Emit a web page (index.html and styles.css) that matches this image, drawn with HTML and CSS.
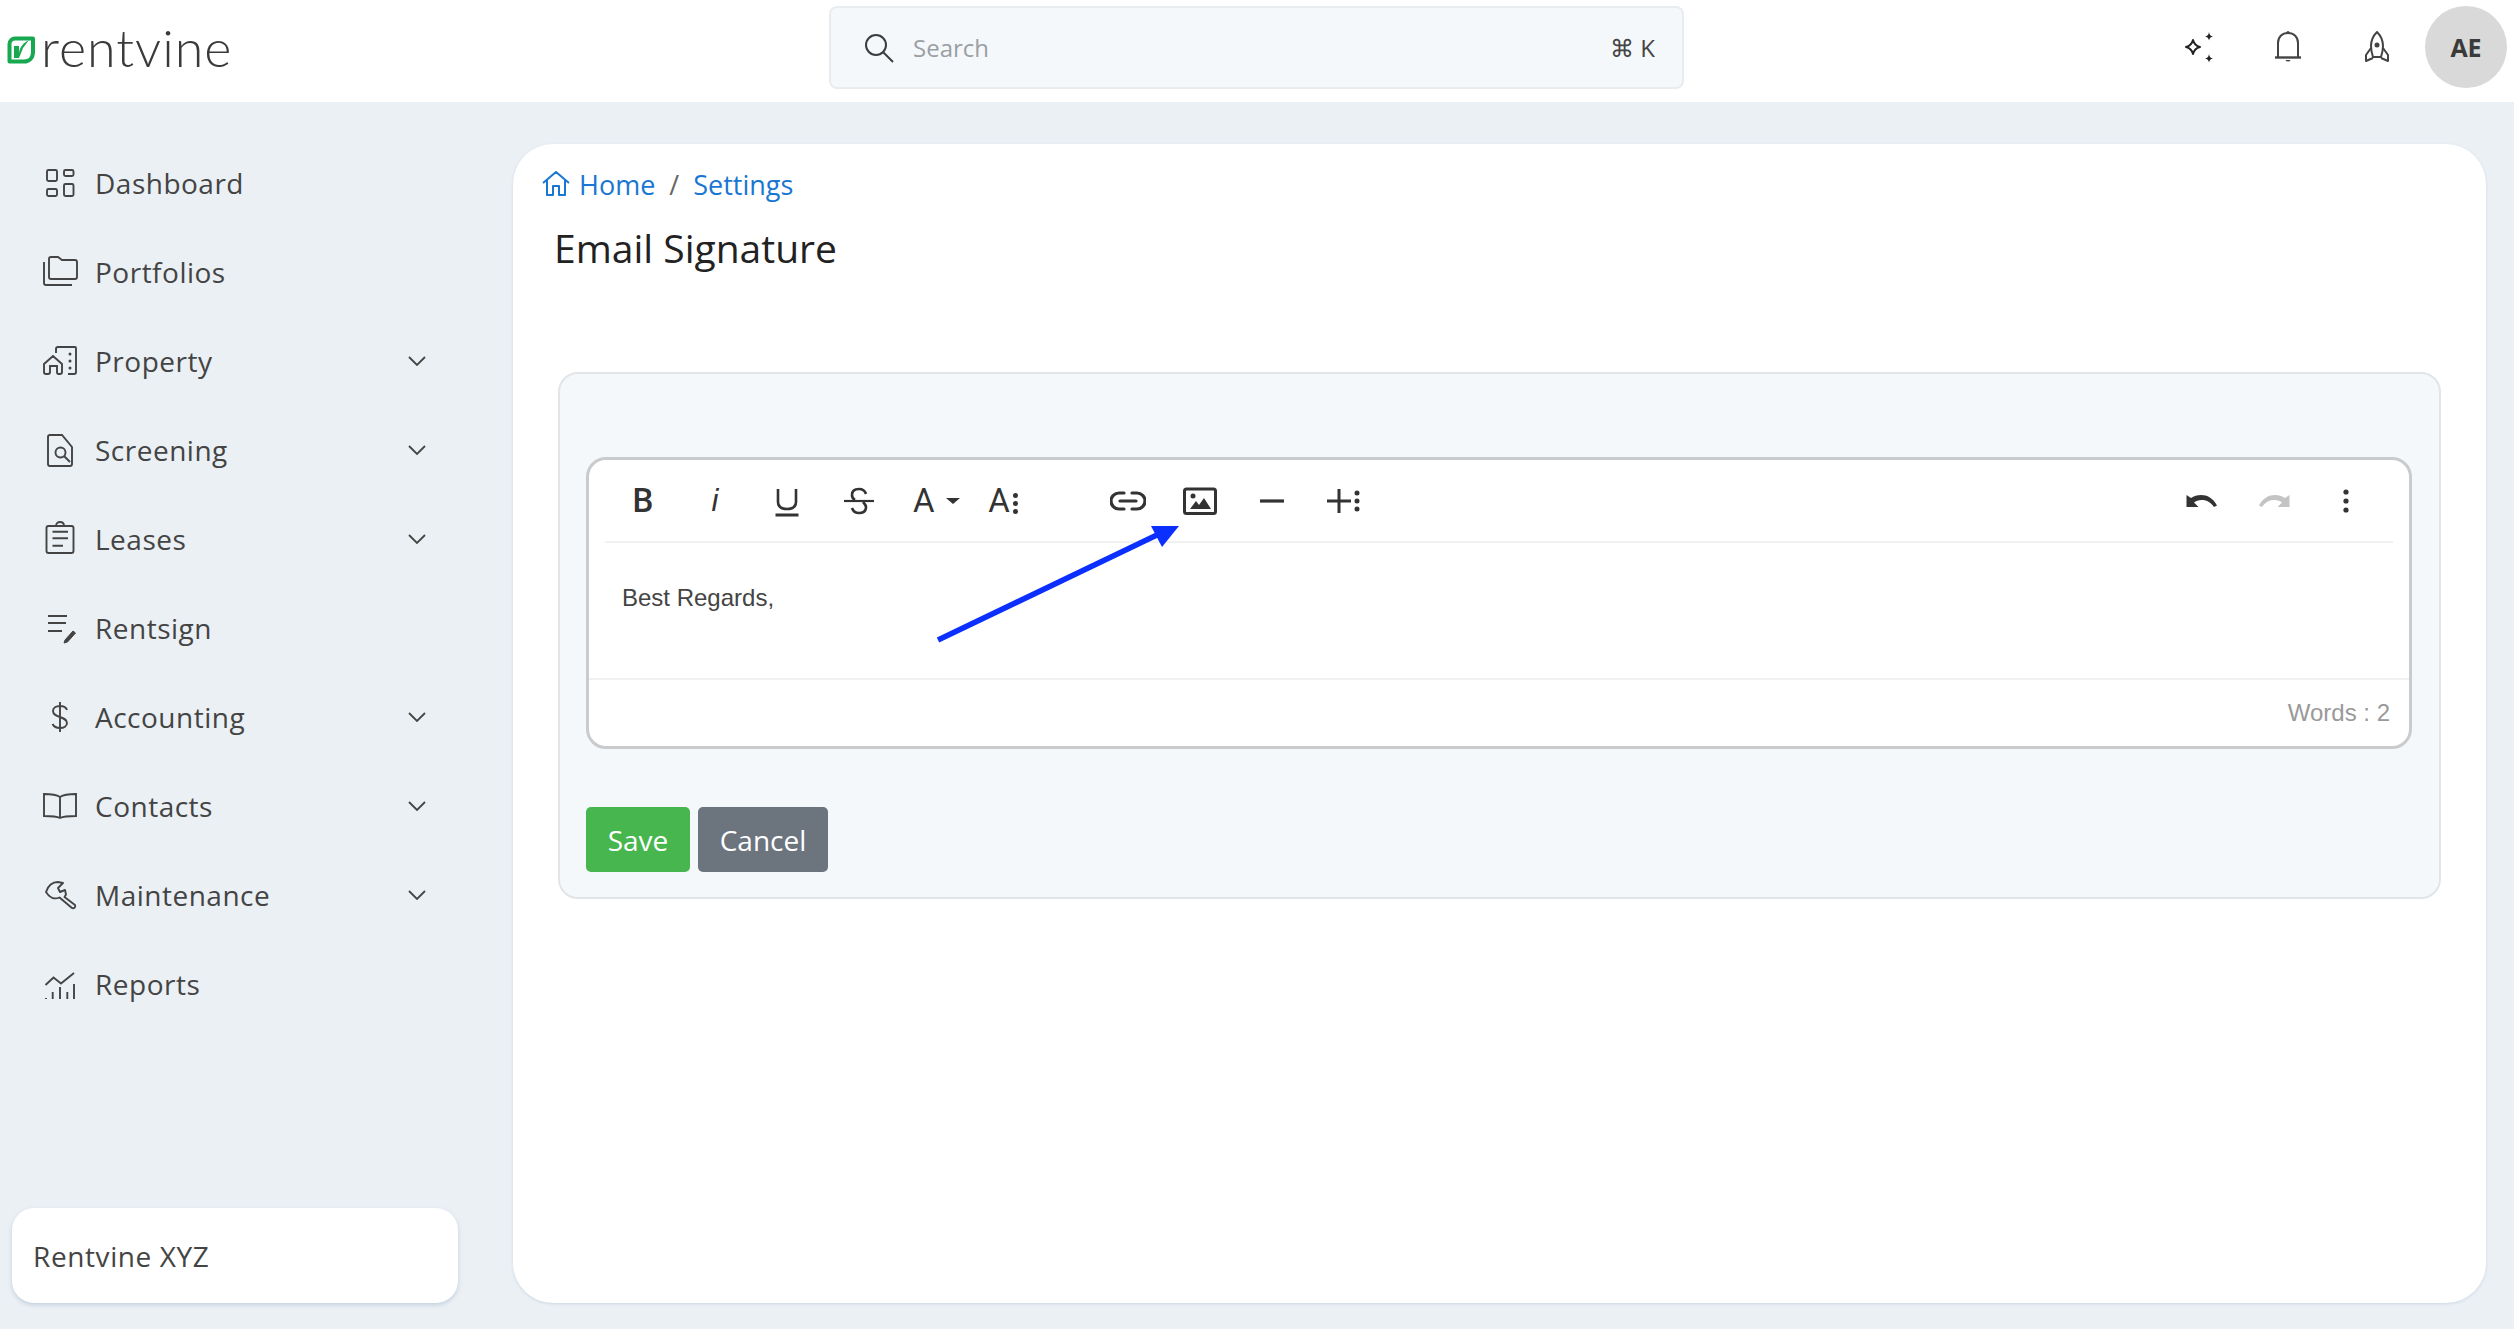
FILE: index.html
```html
<!DOCTYPE html>
<html lang="en">
<head>
    <meta charset="UTF-8">
    <meta name="viewport" content="width=device-width, initial-scale=1.0">
    <title>Email Signature</title>
    <link rel="stylesheet" href="styles.css">
</head>
<body>
  <header class="topbar">
    <div class="logo">
      <svg class="logo-mark" width="28" height="28" viewBox="0 0 28 28">
        <path d="M8 2.500H26V16C26 22 22 25.500 17 25.500H2.500V8C2.500 5 5 2.500 8 2.500z" fill="none" stroke="#16a950" stroke-width="4" stroke-linejoin="round"/>
        <path d="M7 10v12h5l4-10 6-8c-6 3-9 7-10 13v-7z" fill="#16a950"/>
      </svg>
      <span class="logo-text">rentvine</span>
    </div>
    <div class="search">
      <svg width="32" height="32" viewBox="0 0 32 32" fill="none" stroke="#3c3c3c" stroke-width="2">
        <circle cx="13" cy="13" r="10"/><path d="M20 20l10 10"/>
      </svg>
      <span class="search-text">Search</span>
      <span class="search-key">⌘ K</span>
    </div>
    <div class="top-icons">
      <svg class="top-icon" width="34" height="34" viewBox="0 0 34 34">
        <path d="M11 10c1 4 3 6 7 7-4 1-6 3-7 7-1-4-3-6-7-7 4-1 6-3 7-7z" fill="none" stroke="#222" stroke-width="2" stroke-linejoin="round"/>
        <path d="M27 2c.5 3 1.500 4 4 4.500-2.500.5-3.500 1.500-4 4-.5-2.500-1.500-3.500-4-4 2.500-.5 3.500-1.500 4-4.500zM27 24c.5 3 1.500 4 4 4.500-2.500.5-3.500 1.500-4 4-.5-2.500-1.500-3.500-4-4 2.500-.5 3.500-1.500 4-4.500z" fill="#222"/>
      </svg>
      <svg class="top-icon" width="34" height="34" viewBox="0 0 34 34" fill="none" stroke="#444" stroke-width="2">
        <path d="M7 27V13C7 7 11 3 17 3s10 4 10 10v14"/><path d="M4 27.500h26" stroke-width="2.400"/>
        <path d="M14.500 30c1 2 4 2 5 0z" fill="#444" stroke="none"/><circle cx="17" cy="2.500" r="1.500" fill="#444" stroke="none"/>
      </svg>
      <svg class="top-icon" width="34" height="34" viewBox="0 0 34 34" fill="none" stroke="#444" stroke-width="2" stroke-linejoin="round">
        <path d="M17 2c-4 4-6 9-6 14 0 4 1 8 2 11h8c1-3 2-7 2-11 0-5-2-10-6-14z"/>
        <path d="M11 18l-5 7v6l7-3M23 18l5 7v6l-7-3"/>
        <circle cx="17" cy="15" r="2.500" fill="#444" stroke="none"/>
      </svg>
      <div class="avatar">AE</div>
    </div>
  </header>

  <div class="layout">
    <aside class="sidebar">
      <nav class="menu">
        <a class="menu-item">
          <svg class="menu-icon" viewBox="0 0 36 36"><rect x="5" y="5" width="10" height="11" rx="1.500"/><rect x="22" y="5" width="9.500" height="6" rx="1.500"/><rect x="5" y="24" width="10" height="7" rx="1.500"/><rect x="22" y="19" width="9.500" height="12" rx="1.500"/></svg>
          <span>Dashboard</span>
        </a>
        <a class="menu-item">
          <svg class="menu-icon" viewBox="0 0 36 36"><path d="M7 5a2 2 0 0 1 2-2h7l4 3h13a2 2 0 0 1 2 2v15a2 2 0 0 1-2 2H9a2 2 0 0 1-2-2z"/><path d="M2 8v21a2 2 0 0 0 2 2h26"/></svg>
          <span>Portfolios</span>
        </a>
        <a class="menu-item">
          <svg class="menu-icon" viewBox="0 0 36 36"><path d="M14 10V6a2 2 0 0 1 2-2h17a1 1 0 0 1 1 1v24a2 2 0 0 1-2 2h-6"/><path d="M2 29v-8l9-8 9 8v8a2 2 0 0 1-2 2h-2a2 2 0 0 1-1-2v-6H8v6a2 2 0 0 1-2 2H4a2 2 0 0 1-2-2z"/><path d="M28 11v.1M28 18v.1M28 25v.1" stroke-width="3" stroke-linecap="round"/></svg>
          <span>Property</span>
          <svg class="chevron" viewBox="0 0 18 10"><path d="M1 1l8 8 8-8"/></svg>
        </a>
        <a class="menu-item">
          <svg class="menu-icon" viewBox="0 0 36 36"><path d="M8 3h12l10 12v17a2 2 0 0 1-2 2H8a2 2 0 0 1-2-2V5a2 2 0 0 1 2-2z"/><circle cx="18.500" cy="20.500" r="5"/><path d="M22 24l6 6"/></svg>
          <span>Screening</span>
          <svg class="chevron" viewBox="0 0 18 10"><path d="M1 1l8 8 8-8"/></svg>
        </a>
        <a class="menu-item">
          <svg class="menu-icon" viewBox="0 0 36 36"><rect x="4.500" y="5" width="27" height="27" rx="2"/><path d="M14 5c0-3 2-4 4-4s4 1 4 4M10.500 10.700H26M10.500 17.300H26M10.500 24.700H21"/></svg>
          <span>Leases</span>
          <svg class="chevron" viewBox="0 0 18 10"><path d="M1 1l8 8 8-8"/></svg>
        </a>
        <a class="menu-item">
          <svg class="menu-icon" viewBox="0 0 36 36"><path d="M6 6h19M6 13h18M6 21h14"/><path d="M23 30l8-9 2.500 2-8 9-3.500 1z" fill="#444" stroke-width="1"/></svg>
          <span>Rentsign</span>
        </a>
        <a class="menu-item">
          <svg class="menu-icon" viewBox="0 0 36 36"><path d="M25 11c-1-3-4-4-7-4-4 0-7 2-7 5 0 7 14 5 14 12 0 3-3 5-7 5-4 0-6-1-7.500-4M18 3v30"/></svg>
          <span>Accounting</span>
          <svg class="chevron" viewBox="0 0 18 10"><path d="M1 1l8 8 8-8"/></svg>
        </a>
        <a class="menu-item">
          <svg class="menu-icon" viewBox="0 0 36 36"><path d="M18 9c-3-2-7-3-16-3v22c9 0 13 .5 16 2 3-1.500 7-2 16-2V6c-9 0-13 1-16 3zM18 9v21"/></svg>
          <span>Contacts</span>
          <svg class="chevron" viewBox="0 0 18 10"><path d="M1 1l8 8 8-8"/></svg>
        </a>
        <a class="menu-item">
          <svg class="menu-icon" viewBox="0 0 36 36"><path d="M4 15C6 9 10 5 16 5l5 1-5 5 2 4 5-2 1 4.500-1.500 2.500L33 28c1 2-1 4-3 3L17.500 20.500C12 23 7 20 4 15z" stroke-linejoin="round"/></svg>
          <span>Maintenance</span>
          <svg class="chevron" viewBox="0 0 18 10"><path d="M1 1l8 8 8-8"/></svg>
        </a>
        <a class="menu-item">
          <svg class="menu-icon" viewBox="0 0 36 36"><path d="M3.500 19l8-7.500 7.500 6L32 7"/><path d="M4 32v1M10.700 26v7M18 21v12M25.300 26v7M32 18v15"/></svg>
          <span>Reports</span>
        </a>
      </nav>
      <div class="org-card">Rentvine XYZ</div>
    </aside>

    <main class="content">
      <div class="breadcrumb">
        <svg width="28" height="26" viewBox="0 0 28 26" fill="none" stroke="#1976d2" stroke-width="2" stroke-linejoin="round"><path d="M1 12L14 1l13 11M5 9v15h6v-9h6v9h6V9"/></svg>
        <a class="crumb-home">Home</a>
        <span class="crumb-sep">/</span>
        <a>Settings</a>
      </div>
      <h1 class="page-title">Email Signature</h1>

      <section class="panel">
        <div class="editor">
          <div class="toolbar">
            <div class="tool-group">
              <button class="tool tool-letter tool-b">B</button>
              <button class="tool tool-letter tool-i">i</button>
              <button class="tool">
                <svg width="34" height="34" viewBox="0 0 34 34" fill="none" stroke="#333" stroke-width="2.600"><path d="M8 5v13c0 5 4 7 9 7s9-2 9-7V5"/><path d="M5.500 31h23" stroke-width="3"/></svg>
              </button>
              <button class="tool">
                <svg width="34" height="34" viewBox="0 0 34 34" fill="none" stroke="#333" stroke-width="2.600"><path d="M24 10c-1-3-4-5-7-5-4 0-7 2-7 6 0 2 1 4 3 5M10 24c1 3 4 5 7 5 4 0 7-2 7-6 0-2-1-3-3-5"/><path d="M2 17h30" stroke-width="2.200"/></svg>
              </button>
              <button class="tool tool-font">
                <span class="tool-letter">A</span><span class="caret"></span>
              </button>
              <button class="tool tool-size">
                <span class="tool-letter">A</span><span class="tool-dots"><i></i><i></i><i></i></span>
              </button>
            </div>
            <div class="tool-group tool-insert">
              <button class="tool">
                <svg width="36" height="36" viewBox="0 0 36 36" fill="none" stroke="#333" stroke-width="3.200" stroke-linecap="round"><path d="M14 10H9a8 8 0 0 0 0 16h5M22 10h5a8 8 0 0 1 0 16h-5M10 18h16"/></svg>
              </button>
              <button class="tool">
                <svg width="36" height="36" viewBox="0 0 36 36"><rect x="2.500" y="6" width="31" height="24.500" rx="2" fill="none" stroke="#333" stroke-width="3"/><circle cx="11" cy="13" r="2.500" fill="#333"/><path d="M8 26l6-8 3 4 5-7 7 11z" fill="#333"/></svg>
              </button>
              <button class="tool">
                <svg width="36" height="36" viewBox="0 0 36 36"><path d="M6 18h24" stroke="#333" stroke-width="3.200"/></svg>
              </button>
              <button class="tool">
                <svg width="36" height="36" viewBox="0 0 36 36" fill="#333"><path d="M1 18h24M13 6v24" stroke="#333" stroke-width="3" fill="none"/><circle cx="31" cy="10" r="2.500"/><circle cx="31" cy="18" r="2.500"/><circle cx="31" cy="26" r="2.500"/></svg>
              </button>
            </div>
            <div class="tool-group tool-history">
              <button class="tool">
                <svg width="36" height="36" viewBox="0 0 36 36"><path d="M2.500 12v12h12l-4.500-4.500C14 16 24 15 30 24l3-1.500C27 10 14 10 7 15z" fill="#333"/></svg>
              </button>
              <button class="tool">
                <svg width="36" height="36" viewBox="0 0 36 36"><path d="M33.500 12v12h-12l4.500-4.500C22 16 12 15 6 24l-3-1.500C9 10 22 10 29 15z" fill="#c4c4c4"/></svg>
              </button>
              <button class="tool">
                <svg width="36" height="36" viewBox="0 0 36 36" fill="#333"><circle cx="18" cy="9" r="2.600"/><circle cx="18" cy="18" r="2.600"/><circle cx="18" cy="27" r="2.600"/></svg>
              </button>
            </div>
          </div>
          <div class="editor-body">Best Regards,</div>
          <div class="editor-footer">Words : 2</div>
          <svg class="arrow" width="260" height="130" viewBox="0 0 260 130">
            <path d="M5 122L226 16" stroke="#0a2fff" stroke-width="5.500"/>
            <path d="M218 8h28l-17 21z" fill="#0a2fff"/>
          </svg>
        </div>
        <div class="actions">
          <button class="btn btn-save">Save</button>
          <button class="btn btn-cancel">Cancel</button>
        </div>
      </section>
    </main>
  </div>
</body>
</html>
```

FILE: styles.css
```css
* {
    margin: 0;
    padding: 0;
    box-sizing: border-box;
}

html, body {
    height: 100%;
}

body {
    font-family: "Open Sans", sans-serif;
    background-color: #ebf0f4;
    color: #3c3c3c;
    display: flex;
    flex-direction: column;
    overflow: hidden;
}

/* Top bar */
.topbar {
    height: 102px;
    background: white;
    display: flex;
    align-items: center;
    flex-shrink: 0;
    position: relative;
}

.logo {
    width: 829px;
    display: flex;
    align-items: center;
    gap: 6px;
    padding-left: 7px;
}

.logo-mark {
    margin-top: -2px;
}

.logo-text {
    font-family: Lato, sans-serif;
    font-weight: 300;
    font-size: 52px;
    letter-spacing: 1px;
    line-height: 1;
    color: #3a3a3a;
    margin-top: -9px;
}

.search {
    width: 855px;
    height: 83px;
    margin-top: -7px;
    padding: 0 27px 0 32px;
    display: flex;
    align-items: center;
    gap: 18px;
    background: #f5f8fb;
    border: 2px solid #e9ecef;
    border-radius: 8px;
}

.search-text {
    flex: 1;
    font-size: 24px;
    color: #9a9fa3;
}

.search-key {
    font-size: 24px;
    color: #444;
}

.top-icons {
    flex: 1;
    display: flex;
    align-items: center;
    justify-content: flex-end;
    gap: 55px;
    padding-right: 7px;
    margin-top: -8px;
}

.avatar {
    width: 82px;
    height: 82px;
    margin-left: -24px;
    border-radius: 50%;
    background: #d9d9d9;
    color: #3a3a3a;
    font-size: 25px;
    font-weight: 700;
    display: flex;
    align-items: center;
    justify-content: center;
}

/* Layout */
.layout {
    flex: 1;
    display: flex;
    min-height: 0;
    padding-bottom: 26px;
}

.sidebar {
    width: 513px;
    flex-shrink: 0;
    display: flex;
    flex-direction: column;
    justify-content: space-between;
    padding: 36px 55px 0 12px;
}

.menu-item {
    height: 89px;
    display: flex;
    align-items: center;
    padding-left: 30px;
    font-size: 28px;
    letter-spacing: 0.5px;
    color: #444;
}

.menu-item span {
    flex: 1;
    margin-left: 17px;
}

.menu-icon {
    width: 36px;
    height: 36px;
    fill: none;
    stroke: #444;
    stroke-width: 1.900;
    flex-shrink: 0;
}

.chevron {
    width: 18px;
    height: 10px;
    margin-right: 32px;
    fill: none;
    stroke: #444;
    stroke-width: 1.800;
}

.org-card {
    width: 446px;
    height: 95px;
    padding-left: 21px;
    display: flex;
    align-items: center;
    background: white;
    border-radius: 22px;
    box-shadow: 0 2px 4px rgba(120, 145, 180, 0.35);
    font-size: 28px;
    letter-spacing: 0.6px;
    color: #444;
}

/* Main card */
.content {
    width: 1973px;
    background: white;
    border-radius: 40px;
    margin-top: 42px;
    padding: 20px 45px 0;
    box-shadow: 0 1px 3px rgba(120, 145, 180, 0.25);
}

.breadcrumb {
    height: 40px;
    margin-left: -16px;
    display: flex;
    align-items: center;
    font-size: 27px;
    color: #1976d2;
}

.crumb-home {
    margin-left: 9px;
}

.crumb-sep {
    margin: 0 14px;
    color: #666;
}

.page-title {
    margin: 17px 0 0 -4px;
    font-size: 39px;
    font-weight: 400;
    line-height: 54px;
    color: #222;
}

.panel {
    margin-top: 97px;
    height: 527px;
    padding: 83px 27px 0 26px;
    background: #f5f8fb;
    border: 2px solid #e2e5e8;
    border-radius: 20px;
}

/* Editor */
.editor {
    position: relative;
    height: 292px;
    background: white;
    border: 3px solid #c9cbcd;
    border-radius: 20px;
    display: flex;
    flex-direction: column;
}

.toolbar {
    height: 83px;
    margin: 0 16px;
    padding-left: 2px;
    display: flex;
    align-items: center;
    border-bottom: 2px solid #f1f1f1;
}

.tool-group {
    display: flex;
    align-items: center;
}

.tool-insert {
    margin-left: 57px;
}

.tool-history {
    margin-left: auto;
    margin-right: 11px;
}

.tool {
    width: 72px;
    height: 50px;
    border: none;
    background: none;
    display: flex;
    align-items: center;
    justify-content: center;
}

.tool-letter {
    font-family: Roboto, sans-serif;
    font-size: 33px;
    font-weight: 400;
    color: #333;
    line-height: 1;
}

.tool-b {
    font-weight: 500;
}

.tool-i {
    font-family: "Liberation Sans", sans-serif;
    font-style: italic;
    font-size: 31px;
    font-weight: 400;
}

.tool-font {
    width: 76px;
    gap: 11px;
    justify-content: flex-start;
    padding-left: 18px;
}

.tool-size {
    width: 64px;
    gap: 3px;
}

.caret {
    border-left: 7px solid transparent;
    border-right: 7px solid transparent;
    border-top: 6px solid #333;
}

.tool-dots {
    display: flex;
    flex-direction: column;
    gap: 3px;
    margin-top: 6px;
}

.tool-dots i {
    width: 5px;
    height: 5px;
    border-radius: 50%;
    background: #333;
}

.editor-body {
    flex: 1;
    padding: 41px 0 0 33px;
    font-family: "Liberation Sans", sans-serif;
    font-size: 24px;
    color: #444;
}

.editor-footer {
    height: 68px;
    padding-right: 19px;
    border-top: 2px solid #f1f1f1;
    display: flex;
    align-items: center;
    justify-content: flex-end;
    font-family: "Liberation Sans", sans-serif;
    font-size: 24px;
    color: #999;
}

.arrow {
    position: absolute;
    left: 344px;
    top: 58px;
}

.actions {
    margin-top: 58px;
    display: flex;
    gap: 8px;
}

.btn {
    height: 65px;
    border: none;
    border-radius: 5px;
    color: white;
    font-family: "Open Sans", sans-serif;
    font-size: 28px;
}

.btn-save {
    width: 104px;
    background-color: #47b64e;
}

.btn-cancel {
    width: 130px;
    background-color: #6c747e;
}
```
